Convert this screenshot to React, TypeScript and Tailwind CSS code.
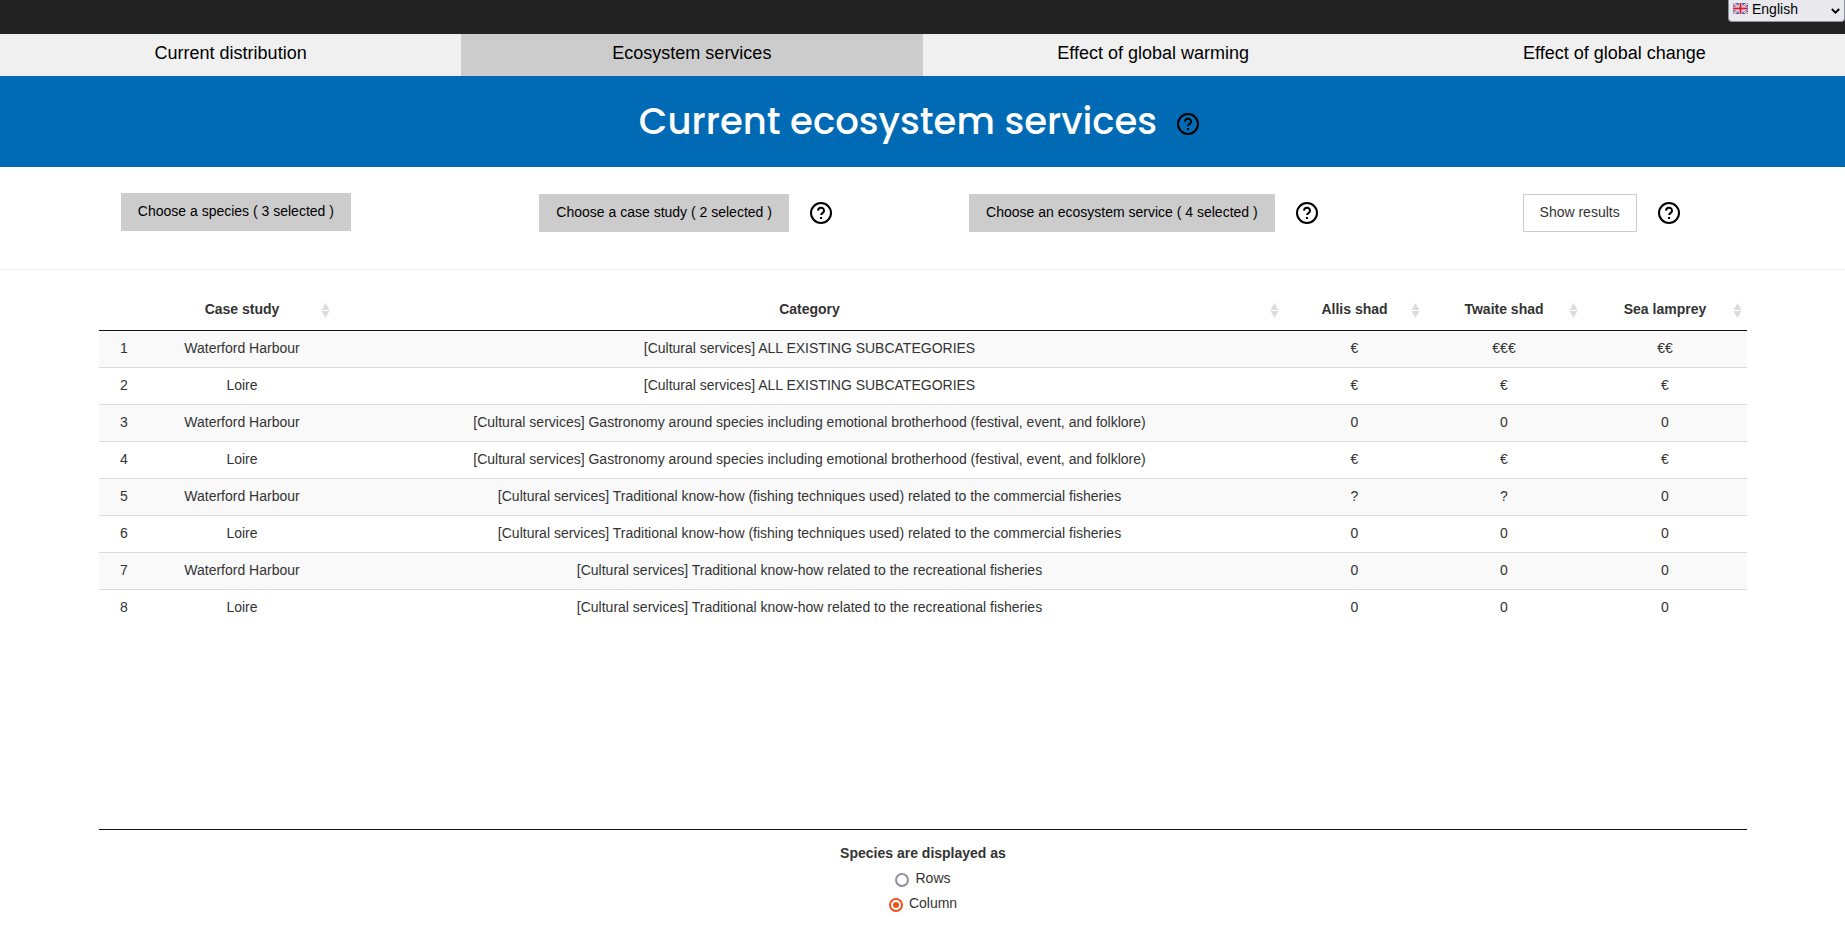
import { useState } from "react";

const tabs = ["Current distribution", "Ecosystem services", "Effect of global warming", "Effect of global change"];

const columns = [
  { label: "Case study", width: "w-[186px]" },
  { label: "Category", width: "" },
  { label: "Allis shad", width: "w-[141px]" },
  { label: "Twaite shad", width: "w-[158px]" },
  { label: "Sea lamprey", width: "w-[164px]" },
];

const all = "[Cultural services] ALL EXISTING SUBCATEGORIES";
const gastronomy =
  "[Cultural services] Gastronomy around species including emotional brotherhood (festival, event, and folklore)";
const fishing =
  "[Cultural services] Traditional know-how (fishing techniques used) related to the commercial fisheries";
const recreational = "[Cultural services] Traditional know-how related to the recreational fisheries";

const rows = [
  ["Waterford Harbour", all, "€", "€€€", "€€"],
  ["Loire", all, "€", "€", "€"],
  ["Waterford Harbour", gastronomy, "0", "0", "0"],
  ["Loire", gastronomy, "€", "€", "€"],
  ["Waterford Harbour", fishing, "?", "?", "0"],
  ["Loire", fishing, "0", "0", "0"],
  ["Waterford Harbour", recreational, "0", "0", "0"],
  ["Loire", recreational, "0", "0", "0"],
];

function HelpButton({ label }: { label: string }) {
  return (
    <button type="button" aria-label={label} className="block text-black">
      <svg viewBox="0 0 22 22" className="size-[22px]" fill="none" stroke="currentColor" strokeWidth="2">
        <circle cx="11" cy="11" r="10" />
        <path d="M8 8.6a3 3 0 0 1 6 .3c0 2-3 2.4-3 4.2" />
        <path d="M10 15h2v2h-2z" fill="currentColor" stroke="none" />
      </svg>
    </button>
  );
}

function SortIcon() {
  return (
    <svg viewBox="0 0 9 15" className="absolute right-[5px] top-[13px] h-[15px] w-[9px]" fill="#dcdcdc" aria-hidden="true">
      <path d="M4.5 0L8.5 7H.5zM.5 8h8l-4 7z" />
    </svg>
  );
}

function Flag() {
  return (
    <svg viewBox="0 0 15 11" className="h-[11px] w-[15px]" aria-hidden="true">
      <rect width="15" height="11" rx="1" fill="#3f62ae" />
      <path d="M0 0L15 11M15 0L0 11" stroke="#fff" strokeWidth="2.2" />
      <path d="M0 0L15 11M15 0L0 11" stroke="#e0475a" strokeWidth=".8" />
      <path d="M7.5 0V11M0 5.5H15" stroke="#fff" strokeWidth="3.4" />
      <path d="M7.5 0V11M0 5.5H15" stroke="#d3203a" strokeWidth="2" />
    </svg>
  );
}

const chooser = "h-[38px] bg-[#ccc] px-[17px] pb-[3px] text-black";
const chooserCell = "flex items-center justify-center gap-[21px] pr-[16px] pt-[1px]";

export default function App() {
  const [layout, setLayout] = useState("Column");
  return (
    <div className="min-h-screen bg-white font-['Liberation_Sans',Arial,sans-serif] text-[14px] leading-[20px] text-[#333]">
      <header className="flex h-[34px] items-start justify-end bg-[#222]">
        <div className="relative">
          <select
            aria-label="Language"
            className="block h-[22px] w-[117px] appearance-none rounded-b-[4px] border border-t-0 border-[#8f8f9d] bg-[#e9e9ed] pb-[3px] pl-[23px] text-[14px] leading-[18px] text-black"
          >
            <option>English</option>
          </select>
          <div className="pointer-events-none absolute inset-x-[5px] top-[3px] flex items-start justify-between">
            <Flag />
            <svg viewBox="0 0 9 6" className="mt-[5px] h-[6px] w-[9px]" fill="none" stroke="#000" strokeWidth="1.8" aria-hidden="true">
              <path d="M.8 1l3.7 3.7L8.2 1" />
            </svg>
          </div>
        </div>
      </header>

      <nav className="grid h-[42px] grid-cols-4 bg-[#f0f0f0] text-center text-[18px] text-black">
        {tabs.map((tab) => (
          <a key={tab} href="#" className={tab === "Ecosystem services" ? "bg-[#ccc] pt-[9px]" : "pt-[9px]"}>
            {tab}
          </a>
        ))}
      </nav>

      <div className="flex h-[91px] items-center justify-center gap-[20px] bg-[#006bb4] pr-[7px]">
        <h1 className="pb-[2px] font-['Poppins',Inter,sans-serif] text-[37px] font-medium leading-[48px] text-white">
          Current ecosystem services
        </h1>
        <div className="pt-[4px]">
          <HelpButton label="About ecosystem services" />
        </div>
      </div>

      <section className="grid grid-cols-4 border-b border-[#eee] px-[7px] pb-[37px] pt-[26px]">
        <div className="flex items-start justify-center">
          <button type="button" className={chooser}>Choose a species ( 3 selected )</button>
        </div>
        <div className={chooserCell}>
          <button type="button" className={chooser}>Choose a case study ( 2 selected )</button>
          <HelpButton label="About case studies" />
        </div>
        <div className={chooserCell}>
          <button type="button" className={chooser}>Choose an ecosystem service ( 4 selected )</button>
          <HelpButton label="About ecosystem service choice" />
        </div>
        <div className={chooserCell}>
          <button type="button" className="h-[38px] border border-[#ccc] bg-white px-[16px] pb-[3px]">
            Show results
          </button>
          <HelpButton label="About results" />
        </div>
      </section>

      <main className="ml-[99px] mr-[98px] mt-[20px]">
        <div className="min-h-[540px] border-b border-[#111]">
          <table className="w-full table-fixed border-separate border-spacing-0 text-center">
            <thead>
              <tr>
                <th className="w-[50px] border-b border-[#111]" aria-label="Row number" />
                {columns.map(({ label, width }) => (
                  <th key={label} className={`relative h-[41px] border-b border-[#111] pb-[3px] font-bold ${width}`}>
                    {label}
                    <SortIcon />
                  </th>
                ))}
              </tr>
            </thead>
            <tbody>
              {rows.map((row, i) => (
                <tr key={i} className="group odd:bg-[#f9f9f9]">
                  {[String(i + 1), ...row].map((cell, j) => (
                    <td key={j} className="h-[37px] border-b border-[#ddd] px-[10px] pb-[3px] group-last:border-b-0">
                      {cell}
                    </td>
                  ))}
                </tr>
              ))}
            </tbody>
          </table>
        </div>

        <div role="radiogroup" aria-labelledby="layout-title" className="pt-[13px] text-center">
          <p id="layout-title" className="mb-[5px] font-bold">Species are displayed as</p>
          {["Rows", "Column"].map((option) => (
            <label key={option} className="mb-[5px] flex items-start justify-center gap-[6px]">
              <input
                type="radio"
                name="layout"
                checked={layout === option}
                onChange={() => setLayout(option)}
                className="mt-[5px] size-[14px] appearance-none rounded-full border-2 border-[#8f8f9d] bg-white bg-clip-content p-[2px] checked:border-[#e95420] checked:bg-[#e95420]"
              />
              {option}
            </label>
          ))}
        </div>
      </main>
    </div>
  );
}
